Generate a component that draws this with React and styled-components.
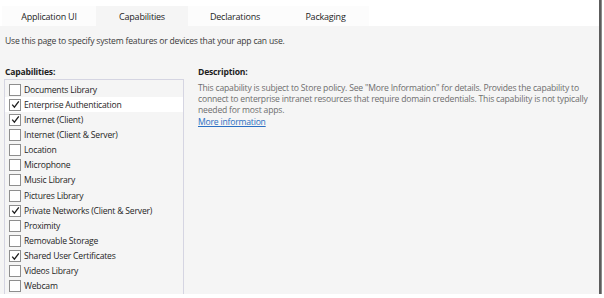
import React from "react";
import styled, { createGlobalStyle } from "styled-components";

const Global = createGlobalStyle`
  html, body { margin: 0; padding: 0; background: #ffffff; }
  body { font-family: "Open Sans", "Noto Sans", sans-serif; letter-spacing: -0.2px; }
`;

const Frame = styled.div`
  width: 599px;
  height: 294px;
  display: flex;
  flex-direction: column;
  background: #f5f5f5;
  overflow: hidden;
  box-shadow: 2px 0 0 #5c5c5c, 3px 0 0 #8a8a8a, 0 2px 0 #5c5c5c, 0 3px 0 #8a8a8a, 3px 3px 0 #8a8a8a;
`;

const TabBar = styled.div`
  height: 26px;
  flex: none;
  background: #ffffff;
  display: flex;
  align-items: flex-end;
  padding-left: 2px;
`;

const Tab = styled.div`
  width: ${(p) => p.$w}px;
  height: 20px;
  display: flex;
  align-items: center;
  justify-content: center;
  font-size: 9px;
  color: #1e1e1e;
  background: ${(p) => (p.$active ? "#f5f5f5" : "#fcfcfc")};
`;

const Body = styled.div`
  flex: 1;
  display: flex;
  flex-direction: column;
  padding: 9px 0 0 5px;
  min-height: 0;
`;

const Intro = styled.div`
  font-size: 8.6px;
  color: #3a3a3a;
  height: 12px;
  line-height: 12px;
`;

const Columns = styled.div`
  display: flex;
  margin-top: 20px;
  flex: 1;
  min-height: 0;
`;

const Left = styled.div`
  width: 179px;
  display: flex;
  flex-direction: column;
  min-height: 0;
`;

const Heading = styled.div`
  font-size: 8.6px;
  font-weight: 700;
  color: #1e1e1e;
  height: 10px;
  line-height: 10px;
`;

const ListBox = styled.div`
  margin-top: 2px;
  margin-left: -1px;
  border: 1px solid #d5d5e2;
  border-bottom: none;
  flex: 1;
  padding-top: 2px;
  display: flex;
  flex-direction: column;
`;

const Row = styled.div`
  height: 15.15px;
  display: flex;
  align-items: center;
  gap: 3px;
  padding-left: 4px;
  background: ${(p) => (p.$selected ? "#ffffff" : "transparent")};
  font-size: 8.6px;
  color: #1e1e1e;
  flex: none;
`;

const Box = styled.span`
  width: 10px;
  height: 10px;
  border: 1px solid #8e8e8e;
  background: #ffffff;
  display: flex;
  align-items: center;
  justify-content: center;
  flex: none;
`;

const Right = styled.div`
  margin-left: 14px;
  width: 394px;
  display: flex;
  flex-direction: column;
  align-items: flex-start;
`;

const Desc = styled.div`
  margin-top: 6px;
  font-size: 8.6px;
  line-height: 11px;
  color: #6e6e6e;
`;

const Link = styled.a`
  margin-top: 1px;
  font-size: 8.6px;
  color: #2a6fc2;
  text-decoration: underline;
  line-height: 11px;
`;

const Check = () => (
  <svg width="9" height="9" viewBox="0 0 9 9">
    <path d="M1.2 4.6 L3.4 7.2 L7.8 1.4" fill="none" stroke="#1e1e1e" strokeWidth="1.3" />
  </svg>
);

const items = [
  ["Documents Library", false],
  ["Enterprise Authentication", true, true],
  ["Internet (Client)", true],
  ["Internet (Client & Server)", false],
  ["Location", false],
  ["Microphone", false],
  ["Music Library", false],
  ["Pictures Library", false],
  ["Private Networks (Client & Server)", true],
  ["Proximity", false],
  ["Removable Storage", false],
  ["Shared User Certificates", true],
  ["Videos Library", false],
  ["Webcam", false],
];

export default function App() {
  return (
    <>
      <Global />
      <Frame>
        <TabBar>
          <Tab $w={94}>Application UI</Tab>
          <Tab $w={92} $active>Capabilities</Tab>
          <Tab $w={94}>Declarations</Tab>
          <Tab $w={87}>Packaging</Tab>
        </TabBar>
        <Body>
          <Intro>Use this page to specify system features or devices that your app can use.</Intro>
          <Columns>
            <Left>
              <Heading>Capabilities:</Heading>
              <ListBox>
                {items.map(([label, checked, sel]) => (
                  <Row key={label} $selected={sel}>
                    <Box>{checked && <Check />}</Box>
                    {label}
                  </Row>
                ))}
              </ListBox>
            </Left>
            <Right>
              <Heading>Description:</Heading>
              <Desc>
                This capability is subject to Store policy. See "More Information" for details. Provides the capability to
                connect to enterprise intranet resources that require domain credentials. This capability is not typically
                needed for most apps.
              </Desc>
              <Link href="#">More information</Link>
            </Right>
          </Columns>
        </Body>
      </Frame>
    </>
  );
}
